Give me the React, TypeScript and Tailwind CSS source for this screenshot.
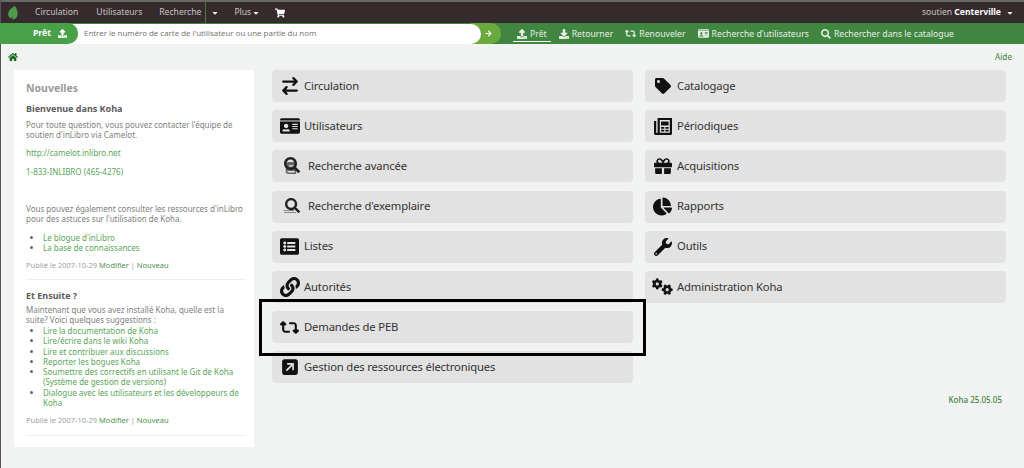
import type { ReactNode } from 'react';
import {
  FaArrowRight,
  FaBook,
  FaCaretDown,
  FaChartPie,
  FaDownload,
  FaGift,
  FaHome,
  FaIdCard,
  FaLink,
  FaListAlt,
  FaSearch,
  FaShoppingCart,
  FaTag,
  FaUpload,
  FaWrench,
} from 'react-icons/fa';
import { FaArrowRightArrowLeft, FaGears, FaRetweet, FaSquareArrowUpRight } from 'react-icons/fa6';

const KohaLeaf = () => (
  <svg viewBox="0 0 10 14" className="ml-[8px] h-[14px] w-[10px] text-[#4f9a4f]" fill="currentColor">
    <path d="M7 0C9 3 10 6 9.5 9C9 12 6.5 14 4 13L5 10L3 12.5C0 11-.5 8 1 5C2 3 4.5 1 7 0Z" />
  </svg>
);

// fa4 newspaper-o, not in the packages in this shape
const Newspaper = () => (
  <svg viewBox="0 0 18 17" className="h-[17px] w-[18px]" fill="currentColor">
    <path d="M4 0H18V15.5A1.5 1.5 0 0 1 16.500 17H1.500A1.500 1.500 0 0 1 0 15.500V3H2.200V14.300A.7.7 0 0 0 3.600 14.300V0ZM5.800 2V14.800H15.800V2Z" fillRule="evenodd" />
    <path d="M7 3.500H14.600V7.500H7ZM7 9H10.300V10.700H7ZM11.400 9H14.600V10.700H11.400ZM7 11.800H10.300V13.500H7ZM11.400 11.800H14.600V13.500H11.400Z" />
  </svg>
);

const AdvancedSearch = () => (
  <span className="relative flex h-[18px] w-[18px]">
    <FaBook size={12} className="absolute left-[1px] top-[5px] text-[#666]" />
    <FaSearch size={16} className="absolute left-0 top-0 text-[#222]" />
  </span>
);

const ItemSearch = () => (
  <span className="relative flex h-[18px] w-[18px]">
    <span className="absolute left-0 top-[12px] h-[1px] w-[10px] bg-[#888]" />
    <span className="absolute left-0 top-[14px] h-[1px] w-[12px] bg-[#888]" />
    <FaSearch size={15} className="absolute left-[1px] top-0 text-[#222]" />
  </span>
);

type Tile = { label: string; icon: ReactNode; wide?: boolean };

const leftTiles: Tile[] = [
  { label: 'Circulation', icon: <FaArrowRightArrowLeft size={18} /> },
  { label: 'Utilisateurs', icon: <FaIdCard size={20} /> },
  { label: 'Recherche avancée', icon: <AdvancedSearch />, wide: true },
  { label: "Recherche d'exemplaire", icon: <ItemSearch />, wide: true },
  { label: 'Listes', icon: <FaListAlt size={19} /> },
  { label: 'Autorités', icon: <FaLink size={20} /> },
  { label: 'Demandes de PEB', icon: <FaRetweet size={19} /> },
  { label: 'Gestion des ressources électroniques', icon: <FaSquareArrowUpRight size={18} /> },
];

const rightTiles: Tile[] = [
  { label: 'Catalogage', icon: <FaTag size={16} /> },
  { label: 'Périodiques', icon: <Newspaper /> },
  { label: 'Acquisitions', icon: <FaGift size={18} /> },
  { label: 'Rapports', icon: <FaChartPie size={19} /> },
  { label: 'Outils', icon: <FaWrench size={18} /> },
  { label: 'Administration Koha', icon: <FaGears size={21} /> },
];

const TileColumn = ({ tiles }: { tiles: Tile[] }) => (
  <div className="flex w-[361px] flex-col gap-[8.2px]">
    {tiles.map((tile) => (
      <div
        key={tile.label}
        className="flex h-[32px] items-center rounded-[4px] bg-[#e2e2e2] text-[11.25px] tracking-[-0.15px] text-[#333]"
      >
        <span className={`flex justify-center text-[#111] ${tile.wide ? 'ml-[12px] w-[18px]' : 'ml-[7px] w-[21px]'}`}>
          {tile.icon}
        </span>
        <span className={tile.wide ? 'ml-[6px]' : 'ml-[4px]'}>{tile.label}</span>
      </div>
    ))}
  </div>
);

const Posted = () => (
  <p className="mt-[7px] text-[7.5px] leading-[10px] text-[#a0a0a0]">
    Publié le 2007-10-29 <span className="text-[#4f8f4f]">Modifier</span> | <span className="text-[#4f8f4f]">Nouveau</span>
  </p>
);

const quickLinks = [
  { label: 'Prêt', icon: <FaUpload size={10} />, active: true },
  { label: 'Retourner', icon: <FaDownload size={10} /> },
  { label: 'Renouveler', icon: <FaRetweet size={11} /> },
  { label: "Recherche d'utilisateurs", icon: <FaIdCard size={11} /> },
  { label: 'Rechercher dans le catalogue', icon: <FaSearch size={10} /> },
];

const App = () => {
  return (
    <div
      className="relative h-[468px] w-[1024px] overflow-hidden bg-[#f1f3f2] text-[#555]"
      style={{ fontFamily: '"Noto Sans", sans-serif' }}
    >
      <div className="h-[2px] bg-[#6b6766]" />
      <nav className="flex h-[21px] items-center bg-[#362b2c] pr-[10px] text-[8.6px] text-[#c8c4c4]">
        <KohaLeaf />
        <span className="ml-[17px]">Circulation</span>
        <span className="ml-[18px]">Utilisateurs</span>
        <span className="ml-[17px]">Recherche</span>
        <span className="ml-[4px] h-full w-px bg-[#3f7d3a]" />
        <FaCaretDown size={8} className="ml-[5px] text-white" />
        <span className="ml-[15px]">Plus</span>
        <FaCaretDown size={8} className="ml-[1px] text-white" />
        <FaShoppingCart size={10} className="ml-[15px] text-white" />
        <span className="ml-auto">
          soutien <b className="font-bold text-white">Centerville</b>
        </span>
        <FaCaretDown size={8} className="ml-[5px] text-white" />
      </nav>

      <div className="flex h-[21px] items-center bg-[#408540] text-[8.7px] text-[#e6f0e6]">
        <div className="relative z-20 flex h-full w-[78px] items-center justify-end rounded-r-[10px] bg-[#48a148]">
          <b className="font-bold text-white">Prêt</b>
          <FaUpload size={9} className="ml-[7px] mr-[11px] text-white" />
        </div>
        <div className="relative z-10 -ml-[10px] flex h-[20px] w-[413px] items-center rounded-r-[10px] bg-white pl-[16px] text-[7.9px] text-[#777]">
          Entrer le numéro de carte de l'utilisateur ou une partie du nom
        </div>
        <div className="-ml-[10px] flex h-full w-[30px] items-center justify-end rounded-r-[10px] bg-[#6aaa3c] pr-[9px]">
          <FaArrowRight size={7} className="text-white" />
        </div>
        <div className="ml-[12px] mt-[2px] flex items-center gap-[4px]">
          {quickLinks.map((link) => (
            <span
              key={link.label}
              className={`flex items-center gap-[3px] border-b px-[4px] pb-[1px] leading-[12px] ${link.active ? 'border-white' : 'border-transparent'}`}
            >
              {link.icon}
              {link.label}
            </span>
          ))}
        </div>
      </div>

      <div className="flex h-[26px] items-start justify-between pl-[8px] pr-[12px] pt-[8px]">
        <FaHome size={10} className="text-[#1a6a1a]" />
        <span className="-mt-[1px] text-[8.2px] leading-[12px] text-[#408540]">Aide</span>
      </div>

      <main className="flex pl-[14px]">
        <aside className="h-[377px] w-[240px] bg-white pl-[12px] pr-[8px] pt-[12px] text-[8px] leading-[10px]">
          <h3 className="text-[10.5px] font-bold leading-[13px] text-[#9a9a9a]">Nouvelles</h3>
          <h4 className="mt-[8px] text-[9px] font-bold leading-[12px] text-[#5a5a5a]">Bienvenue dans Koha</h4>
          <p className="mt-[5px] text-[#808080]">
            Pour toute question, vous pouvez contacter l'équipe de soutien d'inLibro via Camelot.
          </p>
          <p className="mt-[8px] text-[#5aa55a]">http://camelot.inlibro.net</p>
          <p className="mt-[9px] text-[#5aa55a]">1-833-INLIBRO (465-4276)</p>
          <p className="mt-[27px] text-[#808080]">
            Vous pouvez également consulter les ressources d'inLibro pour des astuces sur l'utilisation de Koha.
          </p>
          <ul className="mt-[9px] list-disc pl-[17px] text-[#5aa55a] marker:text-[#666]">
            <li>Le blogue d'inLibro</li>
            <li>La base de connaissances</li>
          </ul>
          <Posted />
          <hr className="mt-[9px] border-[#eeeeee]" />
          <h4 className="mt-[10px] text-[9px] font-bold leading-[12px] text-[#5a5a5a]">Et Ensuite ?</h4>
          <p className="mt-[3px] text-[#808080]">
            Maintenant que vous avez installé Koha, quelle est la suite? Voici quelques suggestions :
          </p>
          <ul className="mt-[1px] list-disc pl-[17px] leading-[10.3px] text-[#5aa55a] marker:text-[#666]">
            <li>Lire la documentation de Koha</li>
            <li>Lire/écrire dans le wiki Koha</li>
            <li>Lire et contribuer aux discussions</li>
            <li>Reporter les bogues Koha</li>
            <li>Soumettre des correctifs en utilisant le Git de Koha (Système de gestion de versions)</li>
            <li>Dialogue avec les utilisateurs et les développeurs de Koha</li>
          </ul>
          <Posted />
          <hr className="mt-[10px] border-[#eeeeee]" />
        </aside>

        <div className="ml-[18px] flex gap-[12px]">
          <TileColumn tiles={leftTiles} />
          <div className="flex flex-col">
            <TileColumn tiles={rightTiles} />
            <p className="mr-[4px] mt-[92px] text-right text-[8px] leading-[10px] text-[#408540]">
              <span className="font-medium">Koha 25.05.05</span>
            </p>
          </div>
        </div>
      </main>

      {/* annotation frame drawn over the screenshot, and the window edge on the left */}
      <div className="absolute left-[259px] top-[299px] h-[57px] w-[387px] border-[3px] border-black" />
      <div className="absolute inset-y-0 left-0 w-px bg-[#555]" />
    </div>
  );
};

export default App;
